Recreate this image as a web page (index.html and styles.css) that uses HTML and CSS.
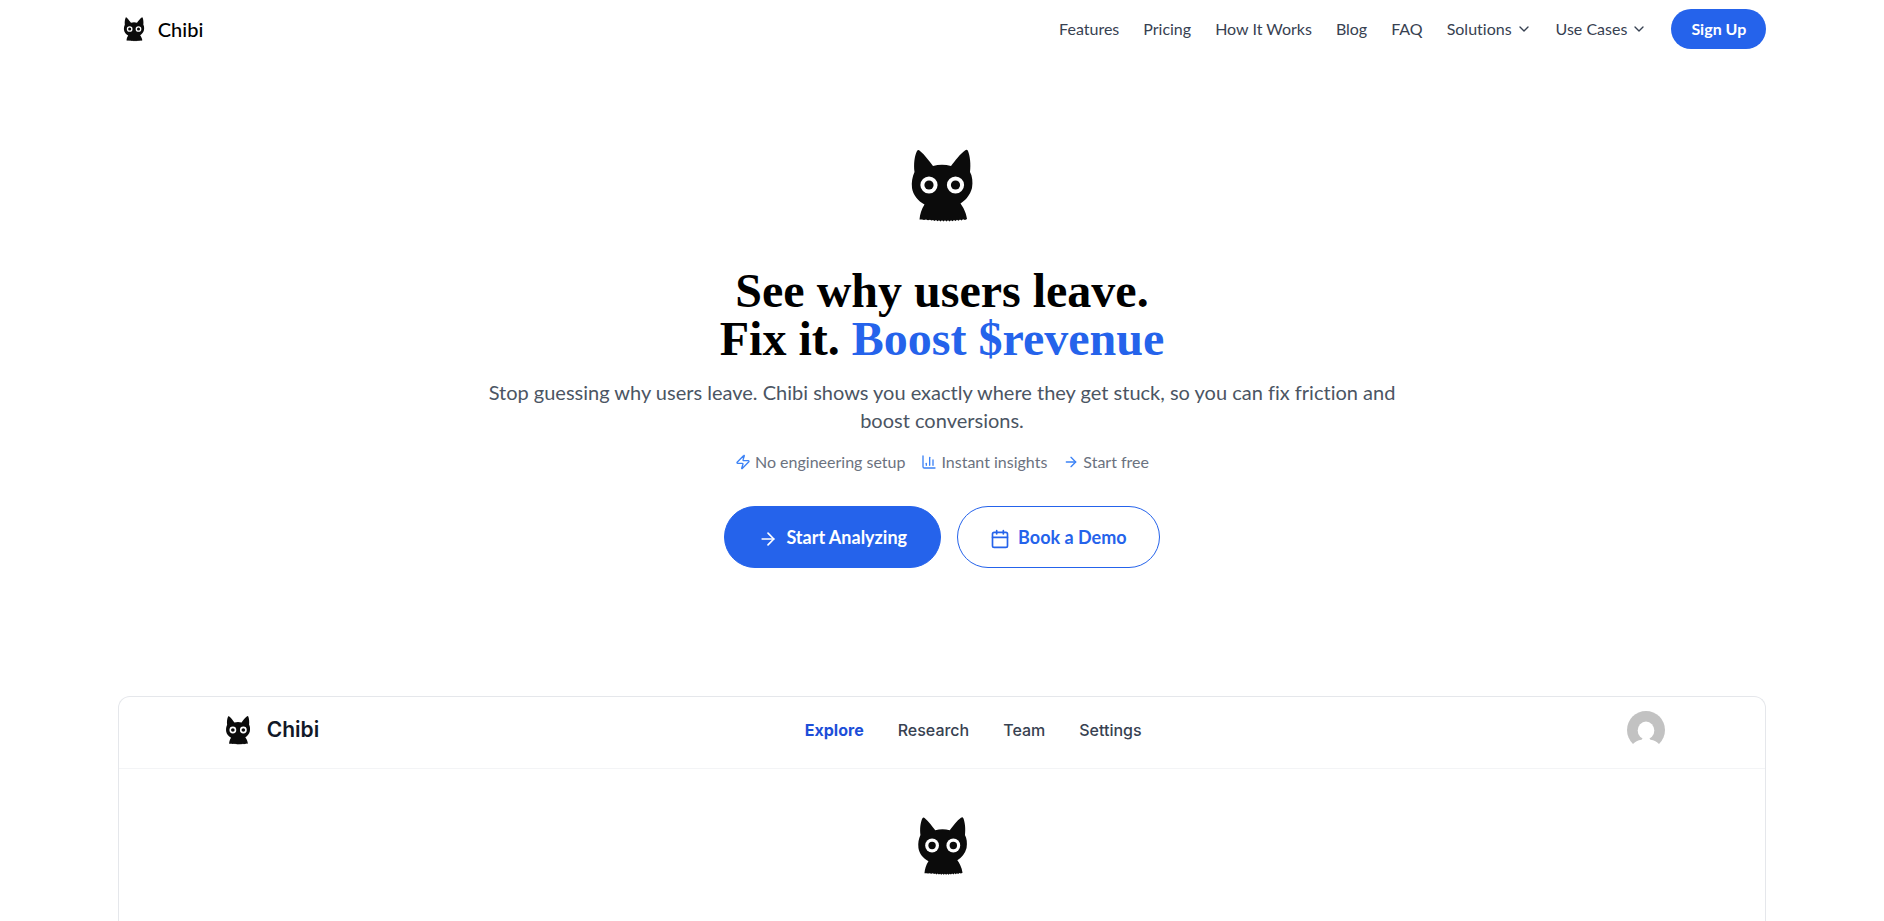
FILE: index.html
```
<!DOCTYPE html>
<html lang="en">
<head>
  <meta charset="UTF-8">
  <meta name="viewport" content="width=device-width, initial-scale=1.0">
  <title>Chibi</title>
  <link rel="stylesheet" href="styles.css">
</head>
<body>
  <!-- Shared cat logo -->
  <svg class="sprite" aria-hidden="true">
    <symbol id="cat" viewBox="3 1 96 96">
      <path fill="#0b0b0b" d="M26 15C27 13.500 28 14 29 15C34 19 38 25 42 30Q51 27.500 60 30C64 25 69 18 74 14.500Q76 13 77 15C79 20 80 28 79 36C81.300 40 82 46 81 52C79 59 75 64 69.500 67.500C72 71 75 76 76 83L74 84L72 83.200L70.500 84.500L69 83.500L67.500 84.800L66 83.700L64.500 85L63 84L61.500 85.200L60 84.200L58.500 85.500L57 84.300L55.500 85.500L54 84.300L52.500 85.500L51 84.300L49.500 85.500L48 84.300L46.500 85.200L45 84L43.500 85L42 84L40.500 84.500L39 83.700L37 84.200L35 83.500L33 84L31 83.500L28.500 83.500C29 78 30.500 73 33.500 68.500C27 65 22 59 21 52C20.300 46 21.300 41 23.500 36C22.500 28 23.500 20 26 15Z"/>
      <circle cx="38" cy="49" r="8.600" fill="#fff"/>
      <circle cx="64.500" cy="49" r="8.600" fill="#fff"/>
      <circle cx="38" cy="49" r="4.600" fill="#0b0b0b"/>
      <circle cx="64.500" cy="49" r="4.600" fill="#0b0b0b"/>
    </symbol>
    <symbol id="chevron" viewBox="0 0 24 24">
      <path d="m6 9 6 6 6-6"/>
    </symbol>
    <symbol id="arrow" viewBox="0 0 24 24">
      <path d="M5 12h14"/>
      <path d="m12 5 7 7-7 7"/>
    </symbol>
  </svg>

  <header class="header container">
    <a class="brand" href="#">
      <svg class="cat-small" aria-hidden="true"><use href="#cat"/></svg>
      <span>Chibi</span>
    </a>
    <nav class="nav">
      <a href="#">Features</a>
      <a href="#">Pricing</a>
      <a href="#">How It Works</a>
      <a href="#">Blog</a>
      <a href="#">FAQ</a>
      <button class="nav-menu" type="button">Solutions <svg class="icon"><use href="#chevron"/></svg></button>
      <button class="nav-menu" type="button">Use Cases <svg class="icon"><use href="#chevron"/></svg></button>
      <a class="signup" href="#">Sign Up</a>
    </nav>
  </header>

  <main class="main">
    <section class="hero">
      <svg class="cat-hero" aria-hidden="true"><use href="#cat"/></svg>
      <h1 class="title">See why users leave.<br>Fix it. <span class="accent">Boost $revenue</span></h1>
      <p class="lead">Stop guessing why users leave. Chibi shows you exactly where they get stuck, so you can fix friction and boost conversions.</p>
      <ul class="points">
        <li>
          <svg class="icon" viewBox="0 0 24 24"><path d="M4 14a1 1 0 0 1-.78-1.630l9.900-10.200a.5.5 0 0 1 .86.46l-1.920 6.020A1 1 0 0 0 13 10h7a1 1 0 0 1 .78 1.630l-9.900 10.200a.5.5 0 0 1-.86-.46l1.920-6.020A1 1 0 0 0 11 14z"/></svg>
          No engineering setup
        </li>
        <li>
          <svg class="icon" viewBox="0 0 24 24"><path d="M3 3v16a2 2 0 0 0 2 2h16"/><path d="M18 17V9"/><path d="M13 17V5"/><path d="M8 17v-3"/></svg>
          Instant insights
        </li>
        <li>
          <svg class="icon"><use href="#arrow"/></svg>
          Start free
        </li>
      </ul>
      <div class="actions">
        <a class="button primary" href="#"><svg class="icon"><use href="#arrow"/></svg>Start Analyzing</a>
        <a class="button outline" href="#"><svg class="icon" viewBox="0 0 24 24"><path d="M8 2v4"/><path d="M16 2v4"/><rect width="18" height="18" x="3" y="4" rx="2"/><path d="M3 10h18"/></svg>Book a Demo</a>
      </div>
    </section>

    <!-- Product preview -->
    <section class="preview container">
      <div class="preview-bar">
        <div class="preview-brand">
          <svg class="cat-medium" aria-hidden="true"><use href="#cat"/></svg>
          <span>Chibi</span>
        </div>
        <nav class="preview-nav">
          <a class="active" href="#">Explore</a>
          <a href="#">Research</a>
          <a href="#">Team</a>
          <a href="#">Settings</a>
        </nav>
        <svg class="avatar" viewBox="0 0 38 38" aria-hidden="true">
          <circle cx="19" cy="19" r="19" fill="#c2c2c2"/>
          <ellipse cx="19" cy="19.500" rx="8.300" ry="9" fill="#fff"/>
          <path fill="#fff" d="M0 38V33H6Q9 29.500 14.500 28.800L16 27H22L23.500 28.800Q29 29.500 32 33H38V38Z"/>
        </svg>
      </div>
      <div class="preview-body">
        <svg class="cat-preview" aria-hidden="true"><use href="#cat"/></svg>
      </div>
    </section>
  </main>
</body>
</html>
```
FILE: styles.css
```
* {
  box-sizing: border-box;
}

body {
  margin: 0;
  min-height: 100vh;
  display: flex;
  flex-direction: column;
  font-family: Lato, sans-serif;
  font-size: 16px;
  line-height: 24px;
  font-variant-ligatures: none;
  color: #000;
  background: #fff;
}

a {
  color: inherit;
  text-decoration: none;
}

svg {
  display: block;
  flex-shrink: 0;
}

.sprite {
  display: none;
}

.container {
  width: 87.5%;
  margin: 0 auto;
}

.icon {
  width: 16px;
  height: 16px;
  fill: none;
  stroke: currentColor;
  stroke-width: 2;
  stroke-linecap: round;
  stroke-linejoin: round;
}

/* Header */
.header {
  display: flex;
  justify-content: space-between;
  align-items: center;
  padding: 9px 0;
}

.brand {
  display: flex;
  align-items: center;
  gap: 8px;
  font-size: 20px;
  font-weight: 500;
}

.cat-small {
  width: 32px;
  height: 32px;
}

.nav {
  display: flex;
  align-items: center;
  gap: 24px;
  color: #374151;
}

.nav-menu {
  display: flex;
  align-items: center;
  gap: 4px;
  padding: 0;
  border: none;
  background: none;
  color: inherit;
  font: inherit;
  font-variant-ligatures: none;
  cursor: pointer;
}

.signup {
  padding: 8px 20px;
  border-radius: 20px;
  background: #2563eb;
  color: #fff;
  font-weight: 700;
}

/* Hero */
.main {
  flex: 1;
  display: flex;
  flex-direction: column;
}

.hero {
  display: flex;
  flex-direction: column;
  align-items: center;
  padding: 79px 24px 128px;
  text-align: center;
}

.cat-hero {
  width: 96px;
  height: 96px;
  margin-bottom: 34px;
}

.title {
  margin: 0 0 15px;
  font-family: "Liberation Serif", serif;
  font-size: 48px;
  line-height: 48px;
  font-weight: 700;
}

.accent {
  color: #2563eb;
}

.lead {
  max-width: 928px;
  margin: 0 0 16px;
  font-size: 20px;
  line-height: 28px;
  color: #4b5563;
}

.points {
  display: flex;
  gap: 16px;
  margin: 0 0 32px;
  padding: 0;
  list-style: none;
  color: #6b7280;
}

.points li {
  display: flex;
  align-items: center;
  gap: 4px;
}

.points .icon {
  color: #3b82f6;
}

.actions {
  display: flex;
  gap: 16px;
}

.button {
  display: flex;
  align-items: center;
  gap: 8px;
  padding: 16px 32px;
  border: 1px solid #2563eb;
  border-radius: 31px;
  font-size: 18px;
  line-height: 28px;
  font-weight: 700;
}

.button .icon {
  width: 20px;
  height: 20px;
  margin-top: 4px;
}

.primary {
  padding: 16px 33px;
  background: #2563eb;
  color: #fff;
}

.outline {
  background: #fff;
  color: #2563eb;
}

/* Preview */
.preview {
  flex: 1;
  border: 1px solid #e5e7eb;
  border-bottom: none;
  border-radius: 12px 12px 0 0;
  font-family: Inter, sans-serif;
}

.preview-bar {
  display: flex;
  justify-content: space-between;
  align-items: center;
  padding: 14px 100px 19px;
  border-bottom: 1px solid #f3f4f6;
}

.preview-brand {
  display: flex;
  align-items: center;
  gap: 10px;
  font-size: 21px;
  font-weight: 600;
  color: #111827;
}

.cat-medium {
  width: 38px;
  height: 38px;
}

.preview-nav {
  display: flex;
  gap: 34px;
  font-weight: 500;
  color: #374151;
}

.preview-nav .active {
  color: #1d4ed8;
  font-weight: 700;
}

.avatar {
  width: 38px;
  height: 38px;
}

.preview-body {
  display: flex;
  justify-content: center;
  padding-top: 38px;
}

.cat-preview {
  width: 77px;
  height: 77px;
}
```
